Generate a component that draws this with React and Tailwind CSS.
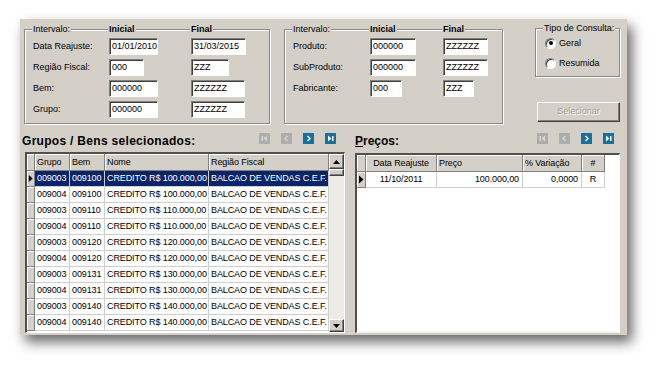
import React from "react";

const LEFT_ROWS = [
  ["009003", "009100", "CREDITO R$ 100.000,00"],
  ["009004", "009100", "CREDITO R$ 100.000,00"],
  ["009003", "009110", "CREDITO R$ 110.000,00"],
  ["009004", "009110", "CREDITO R$ 110.000,00"],
  ["009003", "009120", "CREDITO R$ 120.000,00"],
  ["009004", "009120", "CREDITO R$ 120.000,00"],
  ["009003", "009131", "CREDITO R$ 130.000,00"],
  ["009004", "009131", "CREDITO R$ 130.000,00"],
  ["009003", "009140", "CREDITO R$ 140.000,00"],
  ["009004", "009140", "CREDITO R$ 140.000,00"],
];

// sunken edit box (win classic)
function Field({ value, className }) {
  return (
    <div
      className={`h-[17px] bg-white border border-[#808080] border-b-white border-r-white shadow-[inset_1px_1px_0_#404040] pl-[2px] text-[9px] leading-[15px] whitespace-nowrap overflow-hidden ${className}`}
    >
      {value}
    </div>
  );
}

function Label({ children }) {
  return <div className="pl-[1px] text-[9px] leading-[17px] whitespace-nowrap">{children}</div>;
}

function Legend({ children, bold }) {
  return (
    <span className={`bg-[#d4d0c8] px-[1px] text-[9px] leading-[11px] whitespace-nowrap ${bold ? "font-bold" : ""}`}>
      {children}
    </span>
  );
}

function NavBtn({ kind, enabled }) {
  const fg = enabled ? "#ffffff" : "#d8d8d8";
  return (
    <div className={`w-[11px] h-[11px] ${enabled ? "bg-[#17709e]" : "bg-[#adadad]"}`}>
      <svg width="11" height="11" viewBox="0 0 11 11" className="block">
        {kind === "first" && (
          <>
            <rect x="2.5" y="3" width="1.5" height="5" fill={fg} />
            <path d="M8 2.5 L4.5 5.5 L8 8.5 Z" fill={fg} />
          </>
        )}
        {kind === "prev" && <path d="M6.5 3 L4 5.5 L6.5 8" stroke={fg} strokeWidth="1.4" fill="none" />}
        {kind === "next" && <path d="M4.5 3 L7 5.5 L4.5 8" stroke={fg} strokeWidth="1.4" fill="none" />}
        {kind === "last" && (
          <>
            <path d="M3 2.5 L6.5 5.5 L3 8.5 Z" fill={fg} />
            <rect x="7" y="3" width="1.5" height="5" fill={fg} />
          </>
        )}
      </svg>
    </div>
  );
}

function NavBar({ className }) {
  return (
    <div className={`flex gap-[11px] pt-[2px] ${className}`}>
      <NavBtn kind="first" />
      <NavBtn kind="prev" />
      <NavBtn kind="next" enabled />
      <NavBtn kind="last" enabled />
    </div>
  );
}

function Pointer() {
  return (
    <svg width="8" height="15" viewBox="0 0 8 15" className="block">
      <path d="M2 3.5 L6.5 7.5 L2 11.5 Z" fill="#000" />
    </svg>
  );
}

function Radio({ checked, label }) {
  return (
    <div className="flex items-center h-[14px] pl-[2px] gap-[3px] text-[9px] leading-[11px]">
      <div className="w-[11px] h-[11px] rounded-full bg-white border border-[#808080] border-b-white border-r-white shadow-[inset_1px_1px_0_#404040] flex items-center justify-center">
        {checked && <div className="w-[4px] h-[4px] rounded-full bg-black" />}
      </div>
      <span>{label}</span>
    </div>
  );
}

const HEAD = "bg-[#d4d0c8] border-r border-b border-[#808080] shadow-[inset_1px_1px_0_#fff] text-[9px] leading-[16px] tracking-[-0.1px] whitespace-nowrap overflow-hidden";
const CELL = "border-r border-b border-[#cfcfcf] text-[9px] leading-[15px] tracking-[-0.1px] whitespace-nowrap overflow-hidden";

export default function App() {
  return (
    <div className="w-[668px] h-[379px] bg-white overflow-hidden pt-[19px] pl-[20px] font-['Liberation_Sans',Arial,sans-serif] text-black">
      <div className="w-[607px] h-[316px] bg-[#d4d0c8] shadow-[5px_7px_12px_rgba(0,0,0,0.6)] pt-[10px] pl-[4px]">
        {/* filtros */}
        <div className="flex">
          {/* Intervalo 1 */}
          <div className="w-[246px] h-[95px] border border-[#8c8a84] shadow-[inset_1px_1px_0_#fff,1px_1px_0_#fff] px-[7px]">
            <div className="-mt-[6px] h-[11px] grid grid-cols-[77px_82px_1fr] text-[9px] leading-[11px]">
              <div><Legend>Intervalo:</Legend></div>
              <div className="-ml-[1px]"><Legend bold>Inicial</Legend></div>
              <div className="-ml-[1px]"><Legend bold>Final</Legend></div>
            </div>
            <div className="mt-[3px] grid grid-cols-[77px_82px_1fr] gap-y-[4px]">
              <Label>Data Reajuste:</Label>
              <Field value="01/01/2010" className="w-[49px]" />
              <Field value="31/03/2015" className="w-[55px]" />
              <Label>Região Fiscal:</Label>
              <Field value="000" className="w-[35px]" />
              <Field value="ZZZ" className="w-[38px]" />
              <Label>Bem:</Label>
              <Field value="000000" className="w-[49px]" />
              <Field value="ZZZZZZ" className="w-[54px]" />
              <Label>Grupo:</Label>
              <Field value="000000" className="w-[49px]" />
              <Field value="ZZZZZZ" className="w-[54px]" />
            </div>
          </div>

          {/* Intervalo 2 */}
          <div className="ml-[14px] w-[219px] h-[95px] border border-[#8c8a84] shadow-[inset_1px_1px_0_#fff,1px_1px_0_#fff] px-[7px]">
            <div className="-mt-[6px] h-[11px] grid grid-cols-[78px_73px_1fr] text-[9px] leading-[11px]">
              <div><Legend>Intervalo:</Legend></div>
              <div className="-ml-[1px]"><Legend bold>Inicial</Legend></div>
              <div className="-ml-[1px]"><Legend bold>Final</Legend></div>
            </div>
            <div className="mt-[3px] grid grid-cols-[78px_73px_1fr] gap-y-[4px]">
              <Label>Produto:</Label>
              <Field value="000000" className="w-[46px]" />
              <Field value="ZZZZZZ" className="w-[45px]" />
              <Label>SubProduto:</Label>
              <Field value="000000" className="w-[46px]" />
              <Field value="ZZZZZZ" className="w-[45px]" />
              <Label>Fabricante:</Label>
              <Field value="000" className="w-[32px]" />
              <Field value="ZZZ" className="w-[31px]" />
            </div>
          </div>

          {/* Tipo de consulta */}
          <div className="ml-[32px] w-[85px] -mt-[1px]">
            <div className="h-[49px] border border-[#8c8a84] shadow-[inset_1px_1px_0_#fff,1px_1px_0_#fff] px-[7px]">
              <div className="-mt-[6px] h-[11px] text-[9px] leading-[11px]">
                <Legend>Tipo de Consulta:</Legend>
              </div>
              <div className="mt-[2px] flex flex-col gap-[6px]">
                <Radio checked label="Geral" />
                <Radio label="Resumida" />
              </div>
            </div>
            <div className="mt-[25px] ml-[2px] w-[83px] h-[20px] bg-[#d4d0c8] border border-white border-b-[#404040] border-r-[#404040] shadow-[inset_-1px_-1px_0_#808080] flex items-center justify-center text-[9px] text-[#a19e97] [text-shadow:1px_1px_0_#fff]">
              Selecionar
            </div>
          </div>
        </div>

        {/* grades */}
        <div className="mt-[7px] flex">
          {/* Grupos / Bens */}
          <div className="ml-[1px] w-[320px]">
            <div className="h-[21px] flex justify-between items-start">
              <div className="-ml-[3px] text-[12px] leading-[21px] font-bold tracking-[0.3px]">Grupos / Bens selecionados:</div>
              <NavBar className="mr-[9px]" />
            </div>
            <div className="h-[181px] bg-white border-t-2 border-l-2 border-b border-r border-[#505050] border-b-white border-r-white flex">
              <div className="w-[302px]">
                <div className="h-[17px] flex">
                  <div className={`w-[8px] ${HEAD}`} />
                  <div className={`w-[35px] pl-[2px] ${HEAD}`}>Grupo</div>
                  <div className={`w-[35px] pl-[2px] ${HEAD}`}>Bem</div>
                  <div className={`w-[104px] pl-[2px] ${HEAD}`}>Nome</div>
                  <div className={`w-[120px] pl-[2px] ${HEAD}`}>Região Fiscal</div>
                </div>
                {LEFT_ROWS.map((r, i) => {
                  const sel = i === 0;
                  const c = sel ? "bg-[#0a246a] text-white" : "";
                  return (
                    <div key={i} className="h-[16px] flex">
                      <div className="w-[8px] h-[16px] bg-[#d4d0c8] border-r border-b border-[#808080] shadow-[inset_1px_1px_0_#fff] flex items-center justify-center">
                        {sel && <Pointer />}
                      </div>
                      <div className={`w-[35px] pl-[2px] ${CELL} ${c}`}>{r[0]}</div>
                      <div className={`w-[35px] pl-[2px] ${CELL} ${c}`}>{r[1]}</div>
                      <div className={`w-[104px] pl-[2px] ${CELL} ${c}`}>{r[2]}</div>
                      <div className={`w-[120px] pl-[2px] ${CELL} ${c}`}>BALCAO DE VENDAS C.E.F.</div>
                    </div>
                  );
                })}
              </div>
              {/* scrollbar */}
              <div className="w-[15px] flex flex-col bg-[#ecebe6]">
                <div className="h-[15px] bg-[#d4d0c8] border border-white border-b-[#404040] border-r-[#404040] shadow-[inset_-1px_-1px_0_#808080] flex items-center justify-center">
                  <svg width="7" height="4" viewBox="0 0 7 4" className="block"><path d="M3.5 0 L7 4 L0 4 Z" fill="#000" /></svg>
                </div>
                <div className="h-[7px] bg-[#d4d0c8] border border-white border-b-[#404040] border-r-[#404040] shadow-[inset_-1px_-1px_0_#808080]" />
                <div className="flex-1" />
                <div className="h-[13px] bg-[#d4d0c8] border border-white border-b-[#404040] border-r-[#404040] shadow-[inset_-1px_-1px_0_#808080] flex items-center justify-center">
                  <svg width="7" height="4" viewBox="0 0 7 4" className="block"><path d="M0 0 L7 0 L3.5 4 Z" fill="#000" /></svg>
                </div>
              </div>
            </div>
          </div>

          {/* Preços */}
          <div className="ml-[10px] w-[265px]">
            <div className="h-[21px] flex justify-between items-start">
              <div className="text-[12px] leading-[21px] font-bold">
                <span className="underline">P</span>reços:
              </div>
              <NavBar className="mr-[6px]" />
            </div>
            <div className="h-[180px] mt-[1px] bg-white border-t-2 border-l-2 border-b border-r border-[#505050] border-b-[#ecebe6] border-r-white">
              <div className="h-[17px] flex">
                <div className={`w-[9px] ${HEAD}`} />
                <div className={`w-[71px] text-center ${HEAD}`}>Data Reajuste</div>
                <div className={`w-[86px] pl-[2px] ${HEAD}`}>Preço</div>
                <div className={`w-[59px] pl-[2px] ${HEAD}`}>% Variação</div>
                <div className={`w-[23px] text-center ${HEAD}`}>#</div>
              </div>
              <div className="h-[16px] flex">
                <div className="w-[9px] h-[16px] bg-[#d4d0c8] border-r border-b border-[#808080] shadow-[inset_1px_1px_0_#fff] flex items-center justify-center">
                  <Pointer />
                </div>
                <div className={`w-[71px] text-center ${CELL}`}>11/10/2011</div>
                <div className={`w-[86px] text-right pr-[3px] ${CELL}`}>100.000,00</div>
                <div className={`w-[59px] text-right pr-[3px] ${CELL}`}>0,0000</div>
                <div className={`w-[23px] text-center ${CELL}`}>R</div>
              </div>
            </div>
          </div>
        </div>
      </div>
    </div>
  );
}
